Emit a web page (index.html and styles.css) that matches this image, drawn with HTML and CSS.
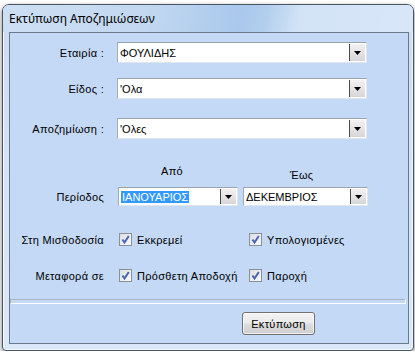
FILE: index.html
```html
<!DOCTYPE html>
<html lang="el">
<head>
<meta charset="utf-8">
<title>Εκτύπωση Αποζημιώσεων</title>
<link rel="stylesheet" href="styles.css">
</head>
<body>
<div class="window">
  <div class="titlebar">Εκτύπωση Αποζημιώσεων</div>
  <div class="client">
    <div class="row row1">
      <span class="label">Εταιρία :</span>
      <div class="combo wide"><span class="combo-text">ΦΟΥΛΙΔΗΣ</span><span class="combo-btn"><svg width="7" height="4" viewBox="0 0 7 4"><polygon points="0,0 7,0 3.5,4" fill="#000"/></svg></span></div>
    </div>
    <div class="row row2">
      <span class="label">Είδος :</span>
      <div class="combo wide"><span class="combo-text">'Ολα</span><span class="combo-btn"><svg width="7" height="4" viewBox="0 0 7 4"><polygon points="0,0 7,0 3.5,4" fill="#000"/></svg></span></div>
    </div>
    <div class="row row3">
      <span class="label">Αποζημίωση :</span>
      <div class="combo wide"><span class="combo-text">'Ολες</span><span class="combo-btn"><svg width="7" height="4" viewBox="0 0 7 4"><polygon points="0,0 7,0 3.5,4" fill="#000"/></svg></span></div>
    </div>
    <div class="header">
      <span class="from">Από</span>
      <span class="to">Έως</span>
    </div>
    <div class="row period">
      <span class="label">Περίοδος</span>
      <div class="combo month1"><span class="combo-text"><span class="selected">ΙΑΝΟΥΑΡΙΟΣ</span></span><span class="combo-btn"><svg width="7" height="4" viewBox="0 0 7 4"><polygon points="0,0 7,0 3.5,4" fill="#000"/></svg></span></div>
      <div class="combo month2"><span class="combo-text">ΔΕΚΕΜΒΡΙΟΣ</span><span class="combo-btn"><svg width="7" height="4" viewBox="0 0 7 4"><polygon points="0,0 7,0 3.5,4" fill="#000"/></svg></span></div>
    </div>
    <div class="row checks checks1">
      <span class="label">Στη Μισθοδοσία</span>
      <label class="check c1"><span class="box"><svg width="11" height="11" viewBox="0 0 11 11"><path d="M2.5 5.5 L4.5 8.5 L8.8 2" fill="none" stroke="#4a63b0" stroke-width="2"/></svg></span>Εκκρεμεί</label>
      <label class="check c2"><span class="box"><svg width="11" height="11" viewBox="0 0 11 11"><path d="M2.5 5.5 L4.5 8.5 L8.8 2" fill="none" stroke="#4a63b0" stroke-width="2"/></svg></span>Υπολογισμένες</label>
    </div>
    <div class="row checks checks2">
      <span class="label">Μεταφορά σε</span>
      <label class="check c1"><span class="box"><svg width="11" height="11" viewBox="0 0 11 11"><path d="M2.5 5.5 L4.5 8.5 L8.8 2" fill="none" stroke="#4a63b0" stroke-width="2"/></svg></span>Πρόσθετη Αποδοχή</label>
      <label class="check c2"><span class="box"><svg width="11" height="11" viewBox="0 0 11 11"><path d="M2.5 5.5 L4.5 8.5 L8.8 2" fill="none" stroke="#4a63b0" stroke-width="2"/></svg></span>Παροχή</label>
    </div>
    <div class="separator"></div>
    <div class="actions"><button class="btn">Εκτύπωση</button></div>
  </div>
</div>
</body>
</html>
```
FILE: styles.css
```css
html, body {
  margin: 0;
  padding: 0;
  background: #ffffff;
}
body {
  font-family: "Liberation Sans", Arial, sans-serif;
  font-size: 11px;
  color: #000;
}
.window {
  box-sizing: border-box;
  margin: 4px 0 0 2px;
  width: 412px;
  height: 347px;
  border: 1px solid #4a5563;
  border-radius: 7px 7px 4px 4px;
  padding: 0 4px 6px 6px;
  background: linear-gradient(180deg, #cbdcf1 0%, #d3e3f6 40%, #dbe8f8 100%);
  box-shadow: inset 1px 1px 0 rgba(255,255,255,0.8), inset -1px -1px 0 rgba(255,255,255,0.6), 0 2px 5px rgba(0,0,0,0.55);
}
.titlebar {
  height: 27px;
  display: flex;
  align-items: center;
  font-family: "Noto Sans", "Liberation Sans", sans-serif;
  font-size: 12px;
  color: #000;
  margin: 0 -4px 0 -6px;
  padding-left: 6px;
  border-radius: 6px 6px 0 0;
  background: linear-gradient(100deg, #cddff3 0%, #c2d8f0 35%, #a9c8ec 58%, #b3cfee 64%, #d2e3f6 72%, #d8e7f8 100%);
}
.client {
  box-sizing: border-box;
  height: 312px;
  border: 1px solid #6b7889;
  background: #c4d9f5;
  display: flex;
  flex-direction: column;
}
.row {
  display: flex;
  align-items: center;
}
.label {
  width: 94px;
  text-align: right;
  flex: none;
  white-space: nowrap;
  letter-spacing: 0.3px;
}
.row1 { margin-top: 9px; height: 21px; }
.row2 { margin-top: 15px; height: 21px; }
.row3 { margin-top: 19px; height: 21px; }
.combo {
  box-sizing: border-box;
  display: flex;
  align-items: stretch;
  background: #fff;
  border: 1px solid;
  border-color: #9aa3ae #dfe6ef #dfe6ef #a3abb6;
  height: 100%;
}
.combo.wide {
  margin-left: 13px;
  width: 250px;
}
.combo-text {
  flex: 1;
  display: flex;
  align-items: center;
  padding-left: 2px;
  white-space: nowrap;
  overflow: hidden;
}
.combo-btn {
  flex: none;
  width: 15px;
  margin: 1px 1px 1px 0;
  border-left: 1px solid #4a4a4a;
  background: linear-gradient(180deg, #f2f2f2 0%, #e4e4e4 50%, #d6d6d6 100%);
  display: flex;
  align-items: center;
  justify-content: center;
}
.header {
  margin-top: 26px;
  display: flex;
  align-items: flex-start;
  height: 17px;
  letter-spacing: 0.3px;
}
.from {
  margin-left: 151px;
  line-height: 13px;
}
.to {
  margin-left: 107px;
  margin-top: 4px;
  line-height: 13px;
}
.period {
  margin-top: 5px;
  height: 19px;
}
.combo.month1 {
  margin-left: 14px;
  width: 120px;
}
.combo.month2 {
  margin-left: 5px;
  width: 125px;
}
.selected {
  background: #3399ff;
  color: #fff;
  padding: 0 1px;
  line-height: 12px;
}
.checks1 { margin-top: 27px; height: 13px; }
.checks2 { margin-top: 23px; height: 13px; }
.check {
  display: flex;
  align-items: center;
  white-space: nowrap;
  letter-spacing: 0.3px;
}
.check.c1 { margin-left: 15px; width: 130px; }
.check.c2 { margin-left: 0; }
.box {
  box-sizing: border-box;
  width: 13px;
  height: 13px;
  border: 1px solid #8c8f94;
  background: linear-gradient(135deg, #d9dde3 0%, #eef0f3 60%, #f7f8fa 100%);
  display: flex;
  align-items: center;
  justify-content: center;
  margin-right: 5px;
  flex: none;
}
.separator {
  box-sizing: border-box;
  margin: 17px 2px 0 0;
  height: 5px;
  border: 1px solid;
  border-color: #a9b4c2 #ffffff #ffffff #a9b4c2;
}
.actions {
  margin-top: 8px;
  padding-left: 232px;
  display: flex;
}
.btn {
  box-sizing: border-box;
  width: 73px;
  height: 23px;
  border: 1px solid #707070;
  border-radius: 3px;
  background: linear-gradient(180deg, #f3f3f3 0%, #ebebeb 48%, #dddddd 52%, #cfcfcf 100%);
  box-shadow: inset 0 0 0 1px rgba(255,255,255,0.7);
  font-family: "Liberation Sans", Arial, sans-serif;
  font-size: 11px;
  letter-spacing: 0.3px;
  color: #000;
  padding: 0;
}
```
